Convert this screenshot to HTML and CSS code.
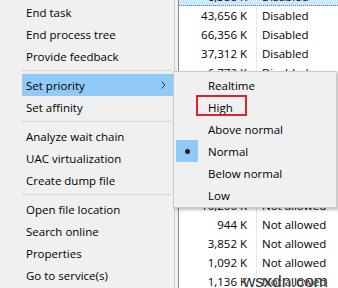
FILE: index.html
```html
<!DOCTYPE html>
<html lang="en">

<head>
    <meta charset="UTF-8">
    <meta name="viewport" content="width=device-width, initial-scale=1.0">
    <title>Set priority</title>
    <link rel="stylesheet" href="styles.css">
</head>

<body>
    <div class="screen">
        <div class="menu">
            <div class="item">End task</div>
            <div class="item">End process tree</div>
            <div class="item">Provide feedback</div>
            <div class="sep"></div>
            <div class="item active">
                Set priority
                <svg class="chevron" width="5" height="8" viewBox="0 0 5 8">
                    <polyline points="0.5,0.5 4,4 0.5,7.5" fill="none" stroke="#333" stroke-width="1" />
                </svg>
            </div>
            <div class="item">Set affinity</div>
            <div class="sep"></div>
            <div class="item">Analyze wait chain</div>
            <div class="item">UAC virtualization</div>
            <div class="item">Create dump file</div>
            <div class="sep"></div>
            <div class="item">Open file location</div>
            <div class="item">Search online</div>
            <div class="item">Properties</div>
            <div class="item">Go to service(s)</div>
        </div>

        <div class="table">
            <div class="row selected"><span class="mem">6,588 K</span><span class="status">Disabled</span></div>
            <div class="row"><span class="mem">43,656 K</span><span class="status">Disabled</span></div>
            <div class="row"><span class="mem">66,356 K</span><span class="status">Disabled</span></div>
            <div class="row"><span class="mem">37,312 K</span><span class="status">Disabled</span></div>
            <div class="row"><span class="mem">6,772 K</span><span class="status">Disabled</span></div>
            <!-- rows hidden behind the submenu -->
            <div class="row"><span class="mem"></span></div>
            <div class="row"><span class="mem"></span></div>
            <div class="row"><span class="mem"></span></div>
            <div class="row"><span class="mem"></span></div>
            <div class="row"><span class="mem"></span></div>
            <div class="row"><span class="mem"></span></div>
            <div class="row"><span class="mem">10,200 K</span><span class="status">Not allowed</span></div>
            <div class="row"><span class="mem">944 K</span><span class="status">Not allowed</span></div>
            <div class="row"><span class="mem">3,852 K</span><span class="status">Not allowed</span></div>
            <div class="row"><span class="mem">1,092 K</span><span class="status">Not allowed</span></div>
            <div class="row"><span class="mem">1,136 K</span><span class="status">Not allowed</span></div>
        </div>

        <div class="submenu">
            <div class="sub-item"><span class="check"></span>Realtime</div>
            <div class="sub-item"><span class="check"></span>High</div>
            <div class="sub-item"><span class="check"></span>Above normal</div>
            <div class="sub-item"><span class="check checked"><span class="dot"></span></span>Normal</div>
            <div class="sub-item"><span class="check"></span>Below normal</div>
            <div class="sub-item"><span class="check"></span>Low</div>
            <div class="mark"></div>
        </div>

        <span class="watermark">wsxdn.com</span>
    </div>
</body>

</html>
```

FILE: styles.css
```css
body {
    margin: 0;
    background: #f0f0f0;
    font-family: "Open Sans", "Noto Sans", sans-serif;
    font-size: 11.5px;
    color: #000;
}

.screen {
    position: relative;
    display: flex;
    width: 338px;
    height: 288px;
    overflow: hidden;
}

/* main context menu */
.menu {
    box-sizing: border-box;
    width: 175px;
    height: 288px;
    padding: 1px 1px 0 22px;
    background: #f0f0f0;
    border-right: 1px solid #cfcfcf;
    flex-shrink: 0;
}

.item {
    display: flex;
    align-items: center;
    height: 22px;
    padding-left: 4px;
}

.item.active {
    background: #91c9f7;
}

.chevron {
    margin-left: auto;
    margin-right: 7px;
}

.sep {
    height: 1px;
    margin: 3px 2px 3px 0;
    background: #d5d5d5;
}

/* process table behind */
.table {
    flex: 1;
    margin-left: 3px;
    background: #fff;
    border-left: 1px solid #8c8c8c;
}

.row {
    display: flex;
    height: 19px;
    align-items: center;
    white-space: nowrap;
}

.row:first-child {
    margin-top: -13px;
}

.row.selected {
    box-sizing: border-box;
    background: #cce8ff;
    border-bottom: 1px dotted #5a7ea8;
}

.mem {
    box-sizing: border-box;
    width: 78px;
    height: 100%;
    display: flex;
    align-items: center;
    justify-content: flex-end;
    padding-right: 9px;
    border-right: 1px solid #e8e8e8;
}

.status {
    padding-left: 5px;
}

/* priority submenu */
.submenu {
    position: absolute;
    top: 71px;
    left: 173px;
    box-sizing: border-box;
    width: 164px;
    height: 137px;
    padding: 2px 0;
    background: #f0f0f0;
    border: 1px solid #cccccc;
    box-shadow: 2px 2px 3px rgba(0, 0, 0, 0.25);
}

.sub-item {
    display: flex;
    align-items: center;
    height: 22px;
}

.check {
    display: flex;
    align-items: center;
    justify-content: center;
    width: 22px;
    height: 22px;
    margin-left: 2px;
    margin-right: 10px;
}

.check.checked {
    background: #91c9f7;
}

.dot {
    width: 5px;
    height: 5px;
    border-radius: 50%;
    background: #222;
}

.mark {
    position: absolute;
    top: 23px;
    left: 22px;
    box-sizing: border-box;
    width: 51px;
    height: 21px;
    border: 2px solid #d9232e;
}

.watermark {
    position: absolute;
    right: 10px;
    bottom: -4px;
    font-family: "Liberation Sans", sans-serif;
    font-size: 17px;
    color: #333;
    text-shadow: 0 0 1px #fff;
}
```
